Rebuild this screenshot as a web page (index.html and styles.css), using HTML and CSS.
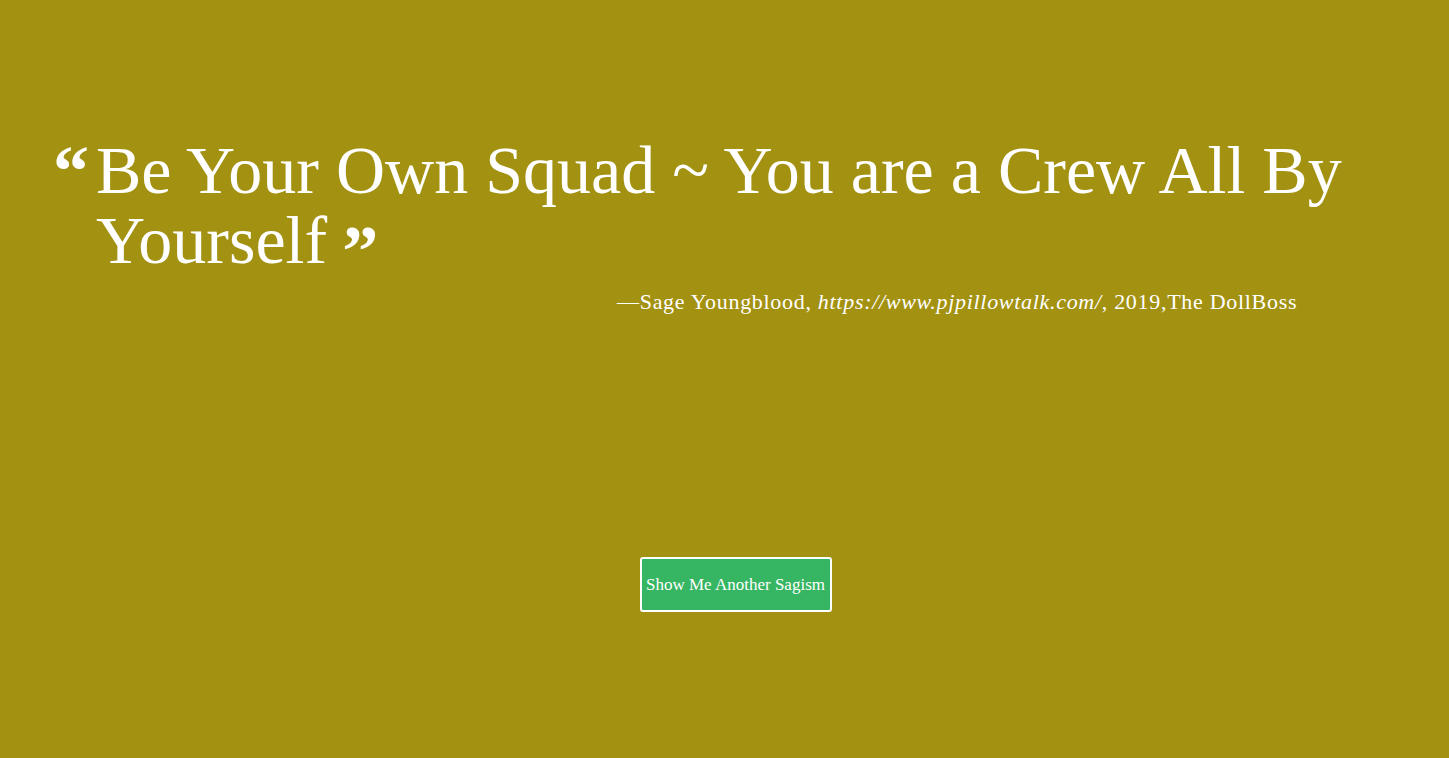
FILE: index.html
```html
<!DOCTYPE html>
<html>
<head>
<meta charset="utf-8">
<link rel="stylesheet" href="styles.css">
</head>
<body>
<main class="page">
  <figure class="quote-box">
    <blockquote class="quote">
      <span class="mark mark-open">&ldquo;</span><span class="quote-text">Be Your Own Squad ~ You are a Crew All By Yourself</span><span class="mark mark-close">&rdquo;</span>
    </blockquote>
    <figcaption class="author">&mdash;Sage Youngblood, <cite class="source">https://www.pjpillowtalk.com/</cite>, 2019,The DollBoss</figcaption>
  </figure>
  <div class="actions">
    <button class="btn">Show Me Another Sagism</button>
  </div>
</main>
</body>
</html>
```

FILE: styles.css
```css
html, body {
  margin: 0;
  padding: 0;
  background: #a39112;
  height: 100%;
}
.page {
  font-family: "Liberation Serif", "DejaVu Serif", serif;
  color: #ffffff;
  padding-top: 135px;
}
.quote-box {
  margin: 0;
  padding: 0 0 0 96px;
}
.quote {
  position: relative;
  margin: 0;
  width: 1270px;
  font-size: 68px;
  line-height: 70px;
}
.mark {
  font-weight: bold;
  font-size: 72px;
  line-height: 0;
}
.mark-open {
  position: absolute;
  left: -43px;
  top: 36px;
}
.mark-close {
  margin-left: 15px;
  position: relative;
  top: 12px;
}
.author {
  margin: 14px 0 0 521px;
  font-size: 22px;
  letter-spacing: 0.7px;
}
.source {
  font-style: italic;
}
.actions {
  display: flex;
  justify-content: center;
  padding-left: 22px;
  margin-top: 242px;
}
.btn {
  font-family: "Liberation Serif", "DejaVu Serif", serif;
  font-size: 17px;
  color: #fff;
  background: #36b562;
  border: 2px solid #fff;
  border-radius: 3px;
  width: 192px;
  height: 55px;
  padding: 0;
}
```
